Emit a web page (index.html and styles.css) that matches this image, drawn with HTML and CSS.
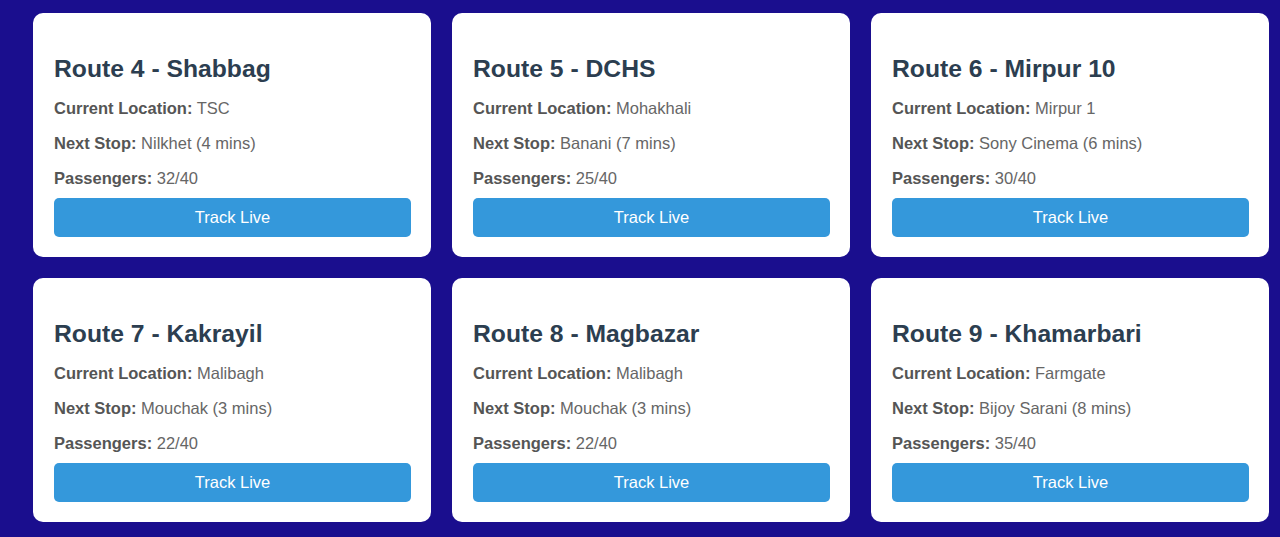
FILE: index.html
```html
<!DOCTYPE html>
<html>
<head>
<meta charset="utf-8">
<link rel="stylesheet" href="styles.css">
</head>
<body>
<div class="grid">
  <div class="card">
    <h3>Route 4 - Shabbag</h3>
    <p><strong>Current Location:</strong> TSC</p>
    <p><strong>Next Stop:</strong> Nilkhet (4 mins)</p>
    <p><strong>Passengers:</strong> 32/40</p>
    <button class="btn">Track Live</button>
  </div>
  <div class="card">
    <h3>Route 5 - DCHS</h3>
    <p><strong>Current Location:</strong> Mohakhali</p>
    <p><strong>Next Stop:</strong> Banani (7 mins)</p>
    <p><strong>Passengers:</strong> 25/40</p>
    <button class="btn">Track Live</button>
  </div>
  <div class="card">
    <h3>Route 6 - Mirpur 10</h3>
    <p><strong>Current Location:</strong> Mirpur 1</p>
    <p><strong>Next Stop:</strong> Sony Cinema (6 mins)</p>
    <p><strong>Passengers:</strong> 30/40</p>
    <button class="btn">Track Live</button>
  </div>
  <div class="card">
    <h3>Route 7 - Kakrayil</h3>
    <p><strong>Current Location:</strong> Malibagh</p>
    <p><strong>Next Stop:</strong> Mouchak (3 mins)</p>
    <p><strong>Passengers:</strong> 22/40</p>
    <button class="btn">Track Live</button>
  </div>
  <div class="card">
    <h3>Route 8 - Magbazar</h3>
    <p><strong>Current Location:</strong> Malibagh</p>
    <p><strong>Next Stop:</strong> Mouchak (3 mins)</p>
    <p><strong>Passengers:</strong> 22/40</p>
    <button class="btn">Track Live</button>
  </div>
  <div class="card">
    <h3>Route 9 - Khamarbari</h3>
    <p><strong>Current Location:</strong> Farmgate</p>
    <p><strong>Next Stop:</strong> Bijoy Sarani (8 mins)</p>
    <p><strong>Passengers:</strong> 35/40</p>
    <button class="btn">Track Live</button>
  </div>
</div>
</body>
</html>
```
FILE: styles.css
```css
html, body {
  margin: 0;
  padding: 0;
  background: #1a0e8e;
  font-family: "Liberation Sans", Arial, sans-serif;
}
.grid {
  display: grid;
  grid-template-columns: repeat(3, 398px);
  column-gap: 21px;
  row-gap: 21px;
  padding: 13px 0 0 33px;
}
.card {
  background: #fff;
  border-radius: 10px;
  padding: 20px 20px 20px 21px;
  height: 244px;
  box-sizing: border-box;
  display: flex;
  flex-direction: column;
}
.card h3 {
  margin: 22px 0 16px;
  font-size: 24.7px;
  font-weight: bold;
  color: #2c3e50;
  line-height: 28px;
}
.card p {
  margin: 0 0 17px;
  font-size: 16.5px;
  line-height: 18px;
  color: #666;
}
.card p:nth-of-type(3) {
  margin-bottom: 11px;
}
.card p strong {
  color: #555;
}
.btn {
  display: block;
  flex-shrink: 0;
  width: 357px;
  height: 39px;
  border: none;
  border-radius: 5px;
  background: #3498db;
  color: #fff;
  font-family: "Liberation Sans", Arial, sans-serif;
  font-size: 16.5px;
  padding: 0;
}
```
